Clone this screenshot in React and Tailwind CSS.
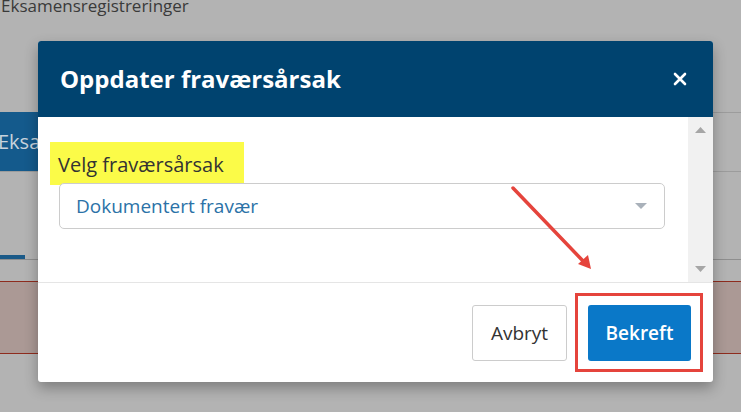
import React from "react";

function BackgroundPage() {
    return (
        <div className="relative h-[412px] w-[741px] overflow-hidden bg-[#b3b3b3]">
            <div className="h-[112px] pl-[1px] pt-0 text-[17px] leading-[17px] text-[#3a3a3a]">
                <span className="relative top-[-3px]">Eksamensregistreringer</span>
            </div>
            <div className="flex h-[60px] border-b border-[#9c9c9c]">
                <div className="flex w-[38px] items-center overflow-hidden whitespace-nowrap bg-[#145a8c] text-[20px] text-[#c8d3dc]">
                    <span className="ml-[-2px]">Eksamen</span>
                </div>
                <div className="flex-1 border-t border-[#9c9c9c]" />
            </div>
            <div className="h-[83px]" />
            <div className="h-[4px] w-[25px] bg-[#1b5a88]" />
            <div className="h-[1px] bg-[#8e8e8e]" />
            <div className="h-[21px]" />
            <div className="h-[73px] border-y border-[#8e2c1e] bg-[#ab9995]" />
        </div>
    );
}

function Modal() {
    return (
        <div className="absolute left-[38px] top-[41px] flex h-[341px] w-[675px] flex-col overflow-hidden rounded-[3px] bg-white shadow-[0_6px_14px_rgba(0,0,0,0.3)]">
            <div className="flex h-[76px] items-center justify-between bg-[#00436f] pl-[22px] pr-[26px]">
                <h2 className="text-[24px] font-bold text-white">Oppdater fraværsårsak</h2>
                <svg width="14" height="14" viewBox="0 0 14 14">
                    <path d="M2 2 L12 12 M12 2 L2 12" stroke="#fff" strokeWidth="2.6" strokeLinecap="round" />
                </svg>
            </div>
            <div className="flex h-[165px]">
                <div className="flex-1 pl-[12px] pt-[25px]">
                    <div className="flex h-[43px] w-[194px] items-center bg-[#fbfb48] pl-[8px] pt-[2px] text-[20px] text-[#333]">
                        Velg fraværsårsak
                    </div>
                    <div className="ml-[9px] mt-[-2px] flex h-[46px] w-[606px] items-center justify-between rounded-[5px] border border-[#ccc] bg-white pl-[16px] pr-[17px] text-[19px] text-[#2b72a7]">
                        <span>Dokumentert fravær</span>
                        <svg width="12" height="6" viewBox="0 0 12 6">
                            <path d="M0 0 L12 0 L6 6 Z" fill="#a9b1ba" />
                        </svg>
                    </div>
                </div>
                <div className="flex w-[25px] flex-col items-center justify-between bg-[#f1f1f1] pb-[10px] pt-[10px]">
                    <svg width="11" height="6" viewBox="0 0 11 6">
                        <path d="M0 6 L11 6 L5.5 0 Z" fill="#a6a6a6" />
                    </svg>
                    <svg width="11" height="6" viewBox="0 0 11 6">
                        <path d="M0 0 L11 0 L5.5 6 Z" fill="#a6a6a6" />
                    </svg>
                </div>
            </div>
            <div className="flex flex-1 items-start justify-end gap-[21px] border-t border-[#e5e5e5] pr-[22px] pt-[22px]">
                <button className="h-[56px] w-[95px] rounded-[3px] border border-[#ccc] bg-white text-[19px] text-[#333]">
                    Avbryt
                </button>
                <button className="h-[56px] w-[103px] rounded-[3px] bg-[#0a78c8] text-[19px] font-semibold text-white">
                    Bekreft
                </button>
            </div>
        </div>
    );
}

function Annotations() {
    return (
        <>
            <div className="absolute left-[575px] top-[293px] h-[79px] w-[128px] border-[3px] border-[#e5443c]" />
            <svg className="pointer-events-none absolute left-0 top-0" width="741" height="412">
                <line x1="513" y1="188" x2="584" y2="262" stroke="#e5443c" strokeWidth="3.5" strokeLinecap="round" />
                <path d="M591 269 L578 264 L588 255 Z" fill="#e5443c" />
            </svg>
        </>
    );
}

export default function App() {
    return (
        <div className="relative h-[412px] w-[741px] overflow-hidden" style={{ fontFamily: '"Open Sans", sans-serif' }}>
            <BackgroundPage />
            <Modal />
            <Annotations />
        </div>
    );
}
